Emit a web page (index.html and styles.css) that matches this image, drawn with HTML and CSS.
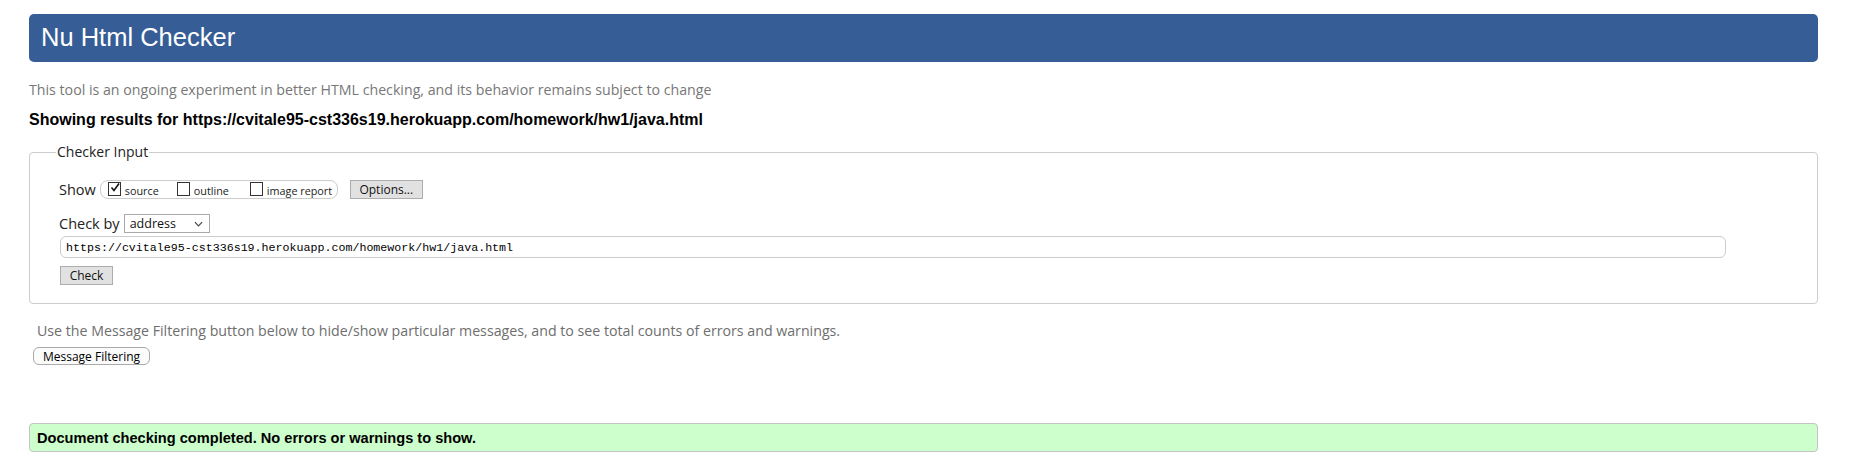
FILE: index.html
```html
<!DOCTYPE html>
<html lang="en">
<head>
<meta charset="utf-8">
<title>Nu Html Checker</title>
<link rel="stylesheet" href="styles.css">
</head>
<body>
<h1 class="header">Nu Html Checker</h1>
<p class="subtitle">This tool is an ongoing experiment in better HTML checking, and its behavior remains subject to change</p>
<p class="showing">Showing results for https://cvitale95-cst336s19.herokuapp.com/homework/hw1/java.html</p>
<fieldset class="input-box">
  <legend class="legend">Checker Input</legend>
  <div class="row show-row">
    <span class="label">Show</span>
    <span class="group">
      <span class="opt"><span class="cb checked"><svg viewBox="0 0 12 12" width="12" height="12"><path d="M2.5 5.5 L5 8.5 L10 1.5" fill="none" stroke="#111" stroke-width="1.6"/></svg></span><span class="opt-text">source</span></span>
      <span class="opt"><span class="cb"></span><span class="opt-text">outline</span></span>
      <span class="opt"><span class="cb"></span><span class="opt-text">image report</span></span>
    </span>
    <span class="btn options">Options...</span>
  </div>
  <div class="row checkby-row">
    <span class="label">Check by</span>
    <span class="select">address<svg class="chev" viewBox="0 0 10 6" width="9" height="6"><path d="M1 1 L5 5 L9 1" fill="none" stroke="#444" stroke-width="1.3"/></svg></span>
  </div>
  <div class="url">https://cvitale95-cst336s19.herokuapp.com/homework/hw1/java.html</div>
  <div class="row">
    <span class="btn check">Check</span>
  </div>
</fieldset>
<p class="filter-note">Use the Message Filtering button below to hide/show particular messages, and to see total counts of errors and warnings.</p>
<div class="filter-row"><span class="filter-btn">Message Filtering</span></div>
<div class="success">Document checking completed. No errors or warnings to show.</div>
</body>
</html>
```
FILE: styles.css
```css
html, body {
  margin: 0;
  padding: 0;
  background: #fff;
}
body {
  padding: 14px 35px 0 29px;
  font-family: "Open Sans", "Noto Sans", sans-serif;
  color: #000;
}
.header {
  margin: 0;
  height: 48px;
  line-height: 47px;
  background: #365d95;
  color: #fff;
  font-family: "Liberation Sans", Arial, sans-serif;
  font-weight: normal;
  font-size: 25.5px;
  padding-left: 12px;
  border-radius: 5px;
}
.subtitle {
  margin: 19px 0 0 0;
  font-size: 14.2px;
  line-height: 18px;
  color: #777;
}
.showing {
  margin: 11px 0 0 0;
  font-family: "Liberation Sans", Arial, sans-serif;
  font-weight: bold;
  font-size: 16px;
  line-height: 20px;
  color: #000;
}
.input-box {
  margin: 12px 0 0 0;
  padding: 0 0 18px 29px;
  border: 1px solid #ccc;
  border-radius: 4px;
  min-width: 0;
}
.legend {
  margin-left: -3px;
  padding: 0 1px;
  font-size: 14px;
  line-height: 20px;
  color: #222;
}
.row {
  display: flex;
  align-items: center;
}
.label {
  font-size: 14.5px;
  color: #222;
  white-space: nowrap;
}
.show-row {
  margin-top: 18px;
  height: 19px;
}
.show-row .label {
  margin-right: 4px;
}
.group {
  display: flex;
  align-items: center;
  box-sizing: border-box;
  width: 238px;
  height: 19px;
  border: 1px solid #ccc;
  border-radius: 8px;
  padding: 0 0 0 7px;
  white-space: nowrap;
}
.opt {
  display: flex;
  align-items: center;
  white-space: nowrap;
}
.opt:nth-child(1) { width: 69px; }
.opt:nth-child(2) { width: 73px; }
.cb {
  display: inline-block;
  flex: none;
  width: 11px;
  height: 12px;
  border: 1px solid #333;
  position: relative;
  top: -1px;
  background: #fff;
}
.cb svg {
  position: absolute;
  left: 0;
  top: -1px;
}
.opt-text {
  margin-left: 4px;
  font-size: 10.8px;
  color: #222;
  position: relative;
  top: 1px;
}
.btn {
  display: inline-flex;
  align-items: center;
  justify-content: center;
  box-sizing: border-box;
  background: #e1e1e1;
  border: 1px solid #adadad;
  font-size: 12px;
  color: #111;
  height: 19px;
}
.options {
  margin-left: 12px;
  width: 73px;
}
.checkby-row {
  margin-top: 15px;
  height: 19px;
}
.checkby-row .label {
  margin-right: 4px;
}
.select {
  box-sizing: border-box;
  width: 86px;
  height: 19px;
  border: 1px solid #a9a9a9;
  display: flex;
  align-items: center;
  justify-content: space-between;
  padding: 0 6px 0 5px;
  font-size: 12.5px;
  color: #111;
}
.url {
  margin-top: 3px;
  margin-right: 91px;
  margin-left: 1px;
  box-sizing: border-box;
  height: 22px;
  border: 1px solid #ccc;
  border-radius: 6px;
  padding-left: 5px;
  display: flex;
  align-items: center;
  font-family: "Liberation Mono", "DejaVu Sans Mono", monospace;
  font-size: 11.65px;
  color: #000;
}
.check {
  margin-top: 8px;
  margin-left: 1px;
  width: 53px;
}
.filter-note {
  margin: 17px 0 0 8px;
  font-size: 14.2px;
  line-height: 20px;
  color: #6e6e6e;
}
.filter-row {
  display: flex;
  margin: 6px 0 0 4px;
}
.filter-btn {
  display: inline-flex;
  align-items: center;
  justify-content: center;
  box-sizing: border-box;
  width: 117px;
  height: 18px;
  border: 1px solid #aaa;
  border-radius: 6px;
  background: #fbfbfb;
  font-size: 12px;
  color: #000;
}
.success {
  margin-top: 58px;
  box-sizing: border-box;
  height: 29px;
  border: 1px solid #c4c4c4;
  border-radius: 4px;
  background: #ccffcc;
  display: flex;
  align-items: center;
  padding-left: 7px;
  font-family: "Liberation Sans", Arial, sans-serif;
  font-weight: bold;
  font-size: 14.6px;
  color: #000;
}
```
